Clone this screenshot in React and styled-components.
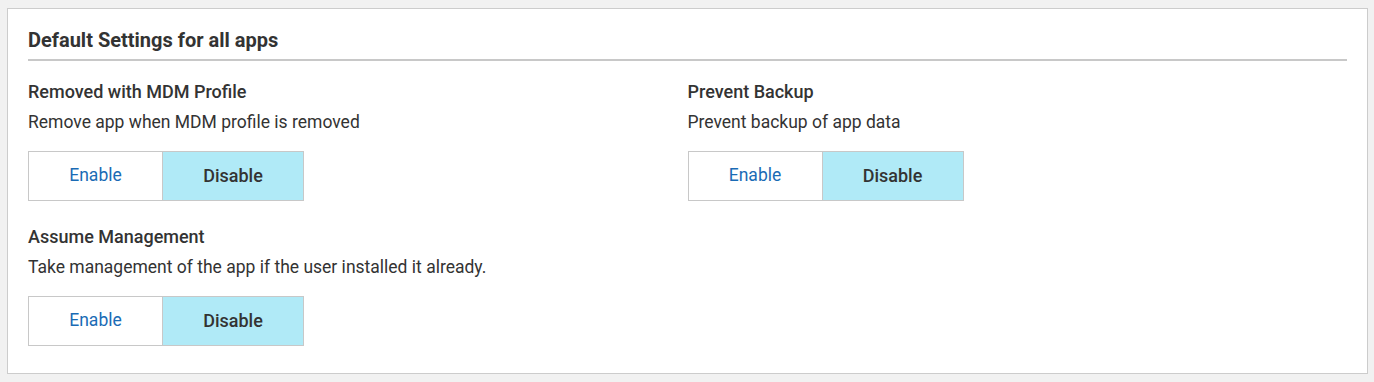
import React from "react";
import styled, { createGlobalStyle } from "styled-components";

const Global = createGlobalStyle`
  html, body { margin: 0; padding: 0; background: #f1f1f1; }
  body { font-family: Roboto, "Liberation Sans", sans-serif; color: #333; }
`;

const Page = styled.div`
  padding: 8px 6px 8px 7px;
`;

const Card = styled.section`
  background: #fff;
  border: 1px solid #cccccc;
  padding: 20px 20px 26px 20px;
  height: 366px;
  box-sizing: border-box;
`;

const Header = styled.h2`
  margin: 0;
  font-size: 20px;
  font-weight: 700;
  line-height: 22px;
  color: #333;
  padding-bottom: 8px;
  border-bottom: 2px solid #c8c8c8;
`;

const Grid = styled.div`
  display: grid;
  grid-template-columns: 1fr 1fr;
  row-gap: 25px;
  padding-top: 20px;
`;

const Setting = styled.div`
  display: flex;
  flex-direction: column;
  align-items: flex-start;
`;

const Label = styled.div`
  font-size: 18px;
  font-weight: 500;
  line-height: 22px;
  color: #333;
`;

const Desc = styled.div`
  font-size: 17.5px;
  font-weight: 400;
  line-height: 22px;
  margin-top: 8px;
  color: #333;
`;

const Toggle = styled.div`
  display: flex;
  margin-top: 18px;
  border: 1px solid #c8c8c8;
`;

const Option = styled.button`
  font-family: Roboto, "Liberation Sans", sans-serif;
  font-size: ${(p) => (p.$active ? "18px" : "17.5px")};
  height: 48px;
  border: 0;
  margin: 0;
  padding: 0 0 2px 0;
  cursor: pointer;
  width: ${(p) => (p.$wide ? "141px" : "133px")};
  background: ${(p) => (p.$active ? "#b0eaf7" : "#fff")};
  color: ${(p) => (p.$active ? "#333" : "#1a6bb5")};
  font-weight: ${(p) => (p.$active ? 500 : 400)};
  & + & { border-left: 1px solid #c8c8c8; }
`;

const settings = [
  { title: "Removed with MDM Profile", desc: "Remove app when MDM profile is removed" },
  { title: "Prevent Backup", desc: "Prevent backup of app data" },
  { title: "Assume Management", desc: "Take management of the app if the user installed it already." },
];

export default function App() {
  return (
    <>
      <Global />
      <Page>
        <Card>
          <Header>Default Settings for all apps</Header>
          <Grid>
            {settings.map((s) => (
              <Setting key={s.title}>
                <Label>{s.title}</Label>
                <Desc>{s.desc}</Desc>
                <Toggle>
                  <Option>Enable</Option>
                  <Option $active $wide>Disable</Option>
                </Toggle>
              </Setting>
            ))}
          </Grid>
        </Card>
      </Page>
    </>
  );
}
